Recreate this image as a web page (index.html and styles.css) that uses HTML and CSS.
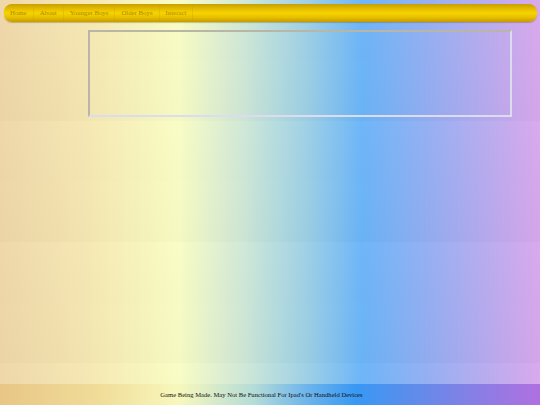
FILE: index.html
```html
<!DOCTYPE html>
<html>
<head>
<meta charset="utf-8">
<link rel="stylesheet" href="styles.css">
</head>
<body>
<div class="page">
  <nav class="nav">
    <a class="nav-item">Home</a>
    <a class="nav-item">About</a>
    <a class="nav-item">Younger Boys</a>
    <a class="nav-item">Older Boys</a>
    <a class="nav-item">Interact</a>
  </nav>
  <div class="panel"></div>
  <footer class="footer">Game Being Made. May Not Be Functional For Ipad's Or Handheld Devices</footer>
</div>
</body>
</html>
```
FILE: styles.css
```css
html, body {
  margin: 0;
  padding: 0;
  height: 100%;
}
body {
  font-family: "Liberation Serif", "DejaVu Serif", serif;
  background:
    linear-gradient(to bottom, rgba(255,255,255,0.02), rgba(0,0,0,0.015)),
    linear-gradient(to right, #efd6a8 0%, #f6eab4 18%, #f9fdc4 33%, #cfe8d6 45%, #9ccfe6 57%, #6bb5f8 67%, #96aef2 80%, #d8a8ec 100%);
  background-size: 100% 121px, 100% 121px;
  background-repeat: repeat-y;
}
.page {
  min-height: 405px;
  display: flex;
  flex-direction: column;
}
.nav {
  margin: 4px 3px 0 4px;
  height: 18px;
  border-radius: 8px;
  background: linear-gradient(to bottom, #c99f00 0%, #e2bb00 25%, #f7d300 50%, #e6bf00 75%, #c69a00 100%);
  box-shadow: 0 1px 1px rgba(120,90,0,0.35);
  display: flex;
  align-items: center;
}
.nav-item {
  font-size: 6.8px;
  color: #b08a00;
  padding: 0 6px;
  line-height: 18px;
  border-right: 1px solid rgba(200,160,0,0.3);
}
.nav-item:first-child { padding-left: 6px; }
.panel {
  margin: 8px 0 0 88px;
  width: 420px;
  height: 83px;
  border: 2px solid;
  border-color: #b9b6a8 #dcdcf0 #dcdcf0 #b9b6a8;
}
.footer {
  margin-top: auto;
  height: 21px;
  line-height: 21px;
  text-align: center;
  font-size: 6.6px;
  color: #111;
  padding-right: 17px;
  background: linear-gradient(to right, #e8c686 0%, #f0dc98 18%, #f8f8bc 33%, #b4dcd8 47%, #6cb4ec 57%, #3898f4 66%, #6c88e8 80%, #b070e0 100%);
}
```
